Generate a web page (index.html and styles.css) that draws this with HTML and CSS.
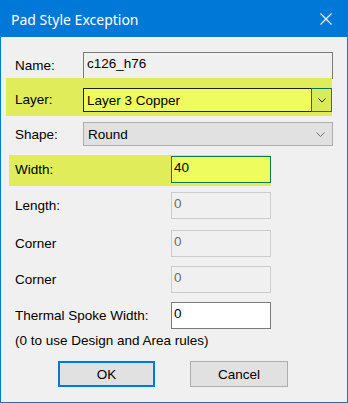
FILE: index.html
```html
<!DOCTYPE html>
<html lang="en">
<head>
  <meta charset="UTF-8">
  <meta name="viewport" content="width=device-width, initial-scale=1.0">
  <title>Pad Style Exception</title>

  <link rel="stylesheet" href="styles.css">
</head>
<body>

  <div class="window">
    <div class="titlebar">
      <span class="title">Pad Style Exception</span>
      <svg class="close" width="12" height="12" viewBox="0 0 12 12">
        <path d="M0.5 0.5 L11.5 11.5 M11.5 0.5 L0.5 11.5" stroke="#fff" stroke-width="1.1" fill="none"/>
      </svg>
    </div>

    <div class="content">
      <div class="row row-name">
        <span class="lbl">Name:</span>
        <div class="field field-wide readonly">c126_h76</div>
      </div>

      <div class="band band-layer">
        <span class="lbl">Layer:</span>
        <div class="combo combo-focus">
          <span class="combo-text">Layer 3 Copper</span>
          <span class="combo-btn">
            <svg width="8" height="5" viewBox="0 0 8 5"><path d="M0.5 0.5 L4 4 L7.5 0.5" stroke="#222" fill="none"/></svg>
          </span>
        </div>
      </div>

      <div class="row row-shape">
        <span class="lbl">Shape:</span>
        <div class="combo">
          <span class="combo-text">Round</span>
          <span class="combo-arrow">
            <svg width="9" height="5" viewBox="0 0 9 5"><path d="M0.5 0.5 L4.5 4.5 L8.5 0.5" stroke="#707070" fill="none"/></svg>
          </span>
        </div>
      </div>

      <div class="band band-width">
        <span class="lbl lbl-long">Width:</span>
        <div class="field field-hl">40</div>
      </div>

      <div class="row row-length">
        <span class="lbl lbl-long">Length:</span>
        <div class="field disabled">0</div>
      </div>

      <div class="row row-corner1">
        <span class="lbl lbl-long">Corner</span>
        <div class="field disabled">0</div>
      </div>

      <div class="row row-corner2">
        <span class="lbl lbl-long">Corner</span>
        <div class="field disabled">0</div>
      </div>

      <div class="row row-thermal">
        <span class="lbl lbl-long">Thermal Spoke Width:</span>
        <div class="field">0</div>
      </div>

      <p class="note">(0 to use Design and Area rules)</p>

      <div class="buttons">
        <button class="btn btn-default">OK</button>
        <button class="btn">Cancel</button>
      </div>
    </div>
  </div>

</body>
</html>
```

FILE: styles.css
```css
body {
  margin: 0;
  font-family: "Liberation Sans", Arial, sans-serif;
  font-size: 13.5px;
  color: #000;
}

.window {
  width: 348px;
  height: 403px;
  box-sizing: border-box;
  border: 1px solid #0078d7;
  background: #f0f0f0;
  overflow: hidden;
}

.titlebar {
  height: 36px;
  background: #0078d7;
  color: #fff;
  display: flex;
  align-items: center;
  justify-content: space-between;
  padding: 0 15px 0 10px;
}

.title {
  font-family: "Noto Sans", sans-serif;
  font-size: 14px;
  margin-top: 1px;
}

.close {
  display: block;
}

.content {
  display: flex;
  flex-direction: column;
}

.row {
  display: flex;
  align-items: center;
  margin-left: 14px;
}

.lbl {
  width: 68px;
  flex: none;
}

.lbl-long {
  width: 156px;
}

/* text boxes */
.field {
  width: 100px;
  height: 27px;
  box-sizing: border-box;
  border: 1px solid #7a7a7a;
  background: #fff;
  padding: 3px 2px 0;
  line-height: 16px;
}

.field-wide {
  width: 250px;
  padding-left: 3px;
}

.readonly {
  background: #f0f0f0;
}

.disabled {
  border-color: #cccccc;
  color: #6d6d6d;
}

.disabled {
  background: #f0f0f0;
}

/* combo boxes */
.combo {
  width: 250px;
  height: 24px;
  box-sizing: border-box;
  border: 1px solid #adadad;
  background: #e1e1e1;
  display: flex;
  align-items: center;
}

.combo-text {
  flex: 1;
  padding-left: 4px;
}

.combo-arrow {
  width: 20px;
  display: flex;
  justify-content: center;
  padding-right: 2px;
}

.combo-focus {
  border-color: #1e1e1e;
  background: #eefc5e;
  border-right: none;
}

.combo-focus .combo-text {
  padding-left: 3px;
}

.combo-btn {
  width: 21px;
  height: 24px;
  box-sizing: border-box;
  margin: -1px 0;
  border: 1px solid #00764f;
  border-right-color: #0078d7;
  background: #d9eb5a;
  display: flex;
  align-items: center;
  justify-content: center;
}

/* yellow highlighter bands */
.band {
  display: flex;
  align-items: center;
  box-sizing: border-box;
  background: #e1ec5a;
}

.band-layer {
  margin: -1px 0 0 5px;
  width: 326px;
  height: 38px;
  padding: 10px 0 4px 9px;
  align-items: flex-start;
}

.band-layer .lbl {
  line-height: 24px;
}

.band-width {
  margin: 9px 0 0 8px;
  width: 262px;
  height: 31px;
  padding: 1px 0 3px 6px;
  align-items: flex-start;
}

.band-width .lbl {
  line-height: 27px;
}

.field-hl {
  background: #eefc5e;
  border-color: #0a7a4c;
}

.row-name { margin-top: 15px; height: 27px; }
.row-shape { margin-top: 6px; height: 24px; }
.row-length { margin-top: 6px; height: 27px; }
.row-corner1 { margin-top: 11px; height: 27px; }
.row-corner2 { margin-top: 9px; height: 27px; }
.row-thermal { margin-top: 9px; height: 27px; }

.note {
  margin: 4px 0 0 14px;
  line-height: 16px;
}

.buttons {
  display: flex;
  gap: 35px;
  margin: 12px 0 0 57px;
}

.btn {
  width: 98px;
  height: 26px;
  box-sizing: border-box;
  border: 1px solid #adadad;
  background: #e1e1e1;
  font: inherit;
  color: #000;
  padding: 0;
}

.btn-default {
  width: 97px;
  border: 2px solid #0078d7;
}
```
